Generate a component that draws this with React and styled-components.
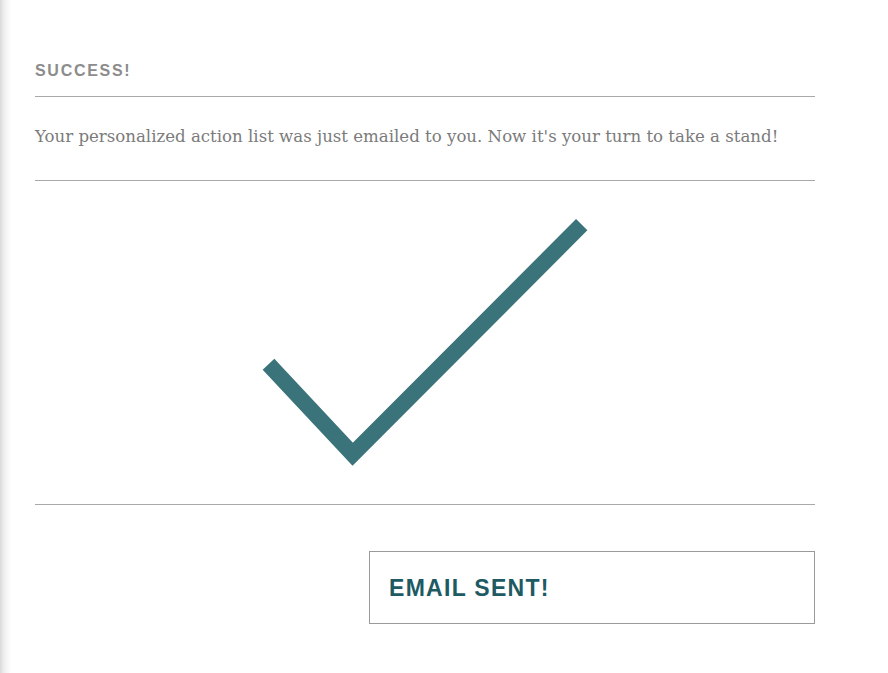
import React from 'react';
import styled, { createGlobalStyle } from 'styled-components';

const GlobalStyle = createGlobalStyle`
  html, body {
    margin: 0;
    padding: 0;
    background: #FFFFFF;
  }
`;

const Page = styled.div`
  min-height: 100vh;
  box-sizing: border-box;
  padding: 61px 0 0 35px;
  background: linear-gradient(to right, #DADADA 0px, #EEEEEE 4px, #FFFFFF 11px);
`;

const Panel = styled.div`
  width: 780px;
  display: flex;
  flex-direction: column;
`;

const Title = styled.div`
  font-family: 'Liberation Sans', Arial, sans-serif;
  font-weight: bold;
  font-size: 16px;
  line-height: 20px;
  letter-spacing: 1.7px;
  color: #8C8C8C;
  padding-bottom: 15px;
  border-bottom: 1px solid #A9A9A9;
`;

const Message = styled.p`
  margin: 0;
  font-family: 'DejaVu Serif', Georgia, serif;
  font-size: 16.6px;
  line-height: 20px;
  color: #7B7B7B;
  padding: 30px 0 33px;
  border-bottom: 1px solid #A9A9A9;
`;

const CheckArea = styled.div`
  height: 323px;
  display: flex;
  align-items: center;
  justify-content: center;
  border-bottom: 1px solid #A9A9A9;
`;

const Actions = styled.div`
  display: flex;
  justify-content: flex-end;
  padding-top: 46px;
`;

const SentBox = styled.div`
  width: 446px;
  height: 73px;
  box-sizing: border-box;
  border: 1px solid #9A9A9A;
  display: flex;
  align-items: center;
  padding: 2px 0 0 19px;
  font-family: 'Liberation Sans', Arial, sans-serif;
  font-weight: bold;
  font-size: 23px;
  letter-spacing: 1.3px;
  color: #1D5A63;
`;

const CheckMark = () => (
  <svg width="326" height="250" viewBox="0 0 326 250">
    <polyline
      points="6.5,146.3 90.7,236.2 319.7,6.7"
      fill="none"
      stroke="#3B737A"
      strokeWidth="16"
      strokeLinejoin="miter"
      strokeMiterlimit="10"
    />
  </svg>
);

export default () => (
  <Page>
    <GlobalStyle />
    <Panel>
      <Title>SUCCESS!</Title>
      <Message>
        Your personalized action list was just emailed to you. Now it's your turn to take a stand!
      </Message>
      <CheckArea>
        <CheckMark />
      </CheckArea>
      <Actions>
        <SentBox>EMAIL SENT!</SentBox>
      </Actions>
    </Panel>
  </Page>
);
